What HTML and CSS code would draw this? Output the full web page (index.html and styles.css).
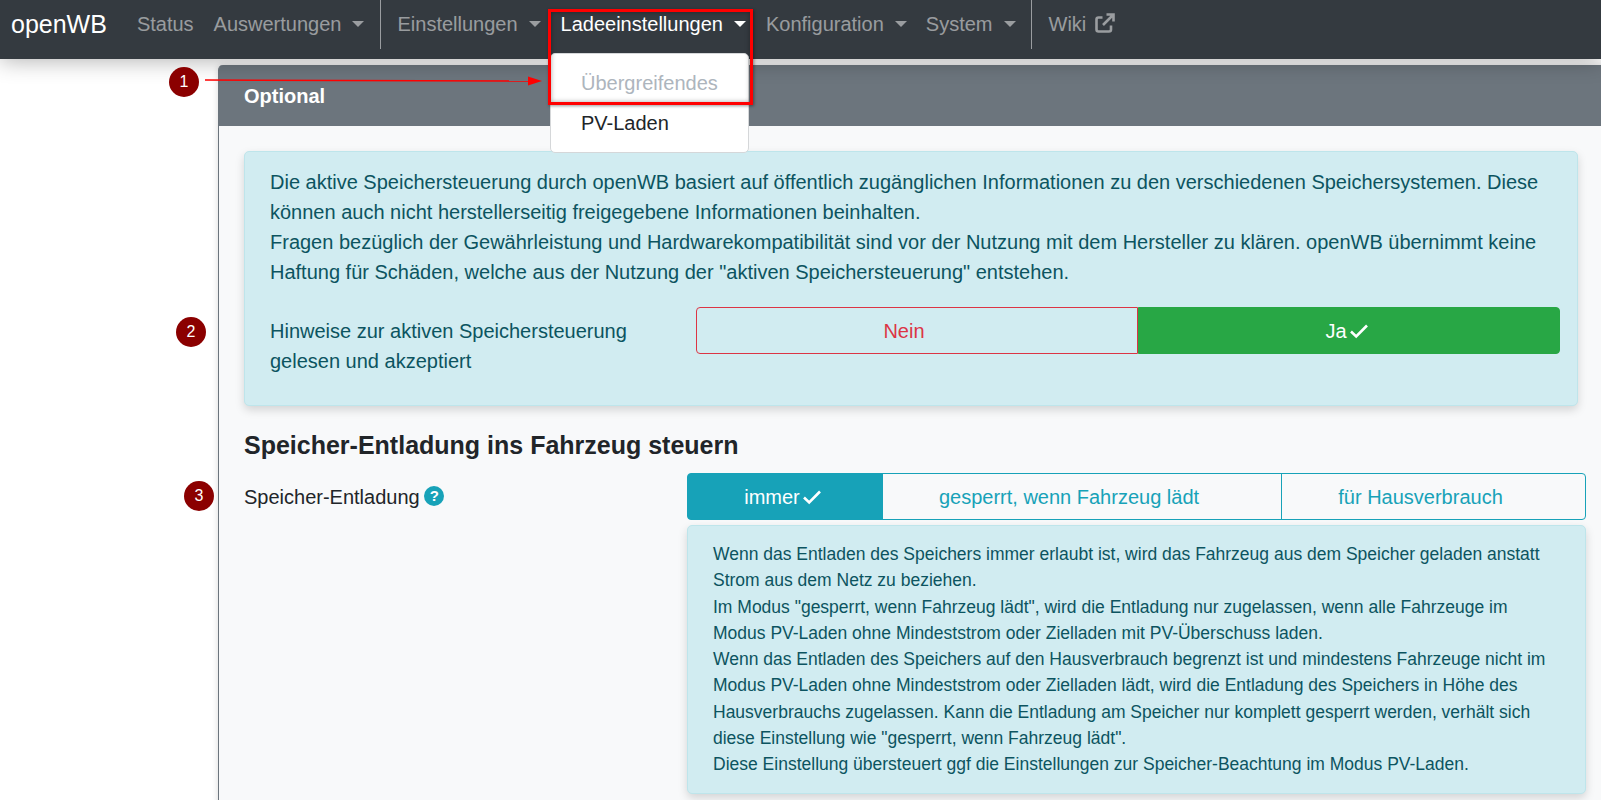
FILE: index.html
```html
<!DOCTYPE html>
<html lang="de">
<head>
    <meta charset="UTF-8">
    <title>openWB</title>
    <link rel="stylesheet" href="styles.css">
</head>
<body>

<nav class="navbar">
    <a class="brand">openWB</a>
    <a class="nav-link">Status</a>
    <a class="nav-link caret">Auswertungen</a>
    <span class="nav-divider"></span>
    <a class="nav-link caret">Einstellungen</a>
    <a class="nav-link caret active">Ladeeinstellungen</a>
    <a class="nav-link caret tight">Konfiguration</a>
    <a class="nav-link caret">System</a>
    <span class="nav-divider divider-end"></span>
    <a class="nav-link wiki">Wiki
        <svg class="icon-external" viewBox="0 0 20 20"><path d="M7.500 4.500H3.500a2 2 0 0 0-2 2v10a2 2 0 0 0 2 2h10.500a2 2 0 0 0 2-2V12.500"/><path d="M8 12L18 2M11.500 1.500h7v7"/></svg>
    </a>
</nav>

<main class="page">
    <section class="card">
        <div class="card-header">Optional</div>
        <div class="card-body">
            <div class="alert">
                Die aktive Speichersteuerung durch openWB basiert auf öffentlich zugänglichen Informationen zu den verschiedenen Speichersystemen. Diese können auch nicht herstellerseitig freigegebene Informationen beinhalten.<br>
                Fragen bezüglich der Gewährleistung und Hardwarekompatibilität sind vor der Nutzung mit dem Hersteller zu klären. openWB übernimmt keine Haftung für Schäden, welche aus der Nutzung der "aktiven Speichersteuerung" entstehen.
                <div class="alert-row">
                    <div class="alert-label">Hinweise zur aktiven Speichersteuerung gelesen und akzeptiert</div>
                    <div class="btn-group accept-group">
                        <button class="btn btn-nein">Nein</button>
                        <button class="btn btn-ja">Ja<svg class="icon-check" viewBox="0 0 20 16"><path d="M2 8.500L7.200 13.500L18 2.500"/></svg></button>
                    </div>
                </div>
            </div>

            <h2 class="section-title">Speicher-Entladung ins Fahrzeug steuern</h2>

            <div class="form-row">
                <div class="form-label">Speicher-Entladung <span class="help-icon">?</span></div>
                <div class="form-field">
                    <div class="btn-group mode-group">
                        <button class="btn btn-mode selected">immer<svg class="icon-check" viewBox="0 0 20 16"><path d="M2 8.500L7.200 13.500L18 2.500"/></svg></button>
                        <button class="btn btn-mode">gesperrt, wenn Fahrzeug lädt</button>
                        <button class="btn btn-mode">für Hausverbrauch</button>
                    </div>
                    <div class="help-box">
                        Wenn das Entladen des Speichers immer erlaubt ist, wird das Fahrzeug aus dem Speicher geladen anstatt Strom aus dem Netz zu beziehen.<br>
                        Im Modus "gesperrt, wenn Fahrzeug lädt", wird die Entladung nur zugelassen, wenn alle Fahrzeuge im Modus PV-Laden ohne Mindeststrom oder Zielladen mit PV-Überschuss laden.<br>
                        Wenn das Entladen des Speichers auf den Hausverbrauch begrenzt ist und mindestens Fahrzeuge nicht im Modus PV-Laden ohne Mindeststrom oder Zielladen lädt, wird die Entladung des Speichers in Höhe des Hausverbrauchs zugelassen. Kann die Entladung am Speicher nur komplett gesperrt werden, verhält sich diese Einstellung wie "gesperrt, wenn Fahrzeug lädt".<br>
                        Diese Einstellung übersteuert ggf die Einstellungen zur Speicher-Beachtung im Modus PV-Laden.
                    </div>
                </div>
            </div>
        </div>
    </section>
</main>

<!-- open menu -->
<div class="dropdown">
    <div class="dropdown-item disabled">Übergreifendes</div>
    <div class="dropdown-item">PV-Laden</div>
</div>

<!-- annotations on top of the screenshot -->
<div class="mark-box"></div>
<svg class="mark-arrow" viewBox="0 0 337 12"><path d="M0 6L325 7" stroke="#f00" stroke-width="1.500"/><path d="M323 2.500L337 7L323 11.500Z" fill="#f00"/></svg>
<div class="marker marker-1">1</div>
<div class="marker marker-2">2</div>
<div class="marker marker-3">3</div>

</body>
</html>
```

FILE: styles.css
```css
html, body {
    margin: 0;
    height: 800px;
    overflow: hidden;
}
body {
    font-family: "Liberation Sans", Arial, sans-serif;
    font-size: 20px;
    line-height: 30px;
    color: #212529;
    background: #fff;
}
.navbar {
    display: flex;
    align-items: flex-start;
    height: 59px;
    padding-left: 11px;
    background: #343a40;
    box-shadow: 0 2px 22px rgba(0,0,0,0.3);
    position: relative;
    z-index: 1;
}
.brand {
    color: #fff;
    font-size: 25px;
    line-height: 48px;
    margin-right: 20px;
}
.nav-link {
    color: rgba(255,255,255,0.5);
    padding: 9px 10px;
    white-space: nowrap;
}
.nav-link.active {
    color: #fff;
}
.nav-link.tight {
    margin-right: -1px;
}
.caret::after {
    content: "";
    display: inline-block;
    margin-left: 11px;
    vertical-align: 4px;
    border-top: 6px solid currentColor;
    border-left: 6px solid transparent;
    border-right: 6px solid transparent;
}
.nav-divider {
    width: 1px;
    height: 49px;
    margin: 0 6px;
    background: rgba(255,255,255,0.5);
}
.nav-divider.divider-end {
    margin-left: 5px;
    margin-right: 7px;
}
.icon-external {
    width: 20px;
    height: 20px;
    margin-left: 3px;
    vertical-align: -2px;
    fill: none;
    stroke: rgba(255,255,255,0.5);
    stroke-width: 2.600;
}
.page {
    padding: 6px 0 0 218px;
}
.card {
    width: 1400px;
    border-left: 1px solid #6c757d;
    border-top-left-radius: 5px;
    background: #f8f9fa;
    height: 740px;
    box-shadow: 0 0 6px rgba(0,0,0,0.15);
}
.card-header {
    height: 61px;
    padding-left: 25px;
    line-height: 63px;
    font-weight: bold;
    color: #fff;
    background: #6c757d;
    border-top-left-radius: 4px;
}
.card-body {
    padding: 25px 0 0 25px;
}
.alert {
    width: 1307px;
    height: 223px;
    padding: 15px 0 15px 25px;
    border: 1px solid #bee5eb;
    border-radius: 5px;
    background: #d1ecf1;
    color: #0c5460;
    box-shadow: 0 4px 10px rgba(0,0,0,0.15);
}
.alert-row {
    display: grid;
    grid-template-columns: 426px 864px;
    margin-top: 20px;
}
.alert-label {
    width: 400px;
    padding-top: 9px;
}
.btn-group {
    display: flex;
}
.btn {
    height: 47px;
    padding: 0;
    font: inherit;
    border: 1px solid;
    background: transparent;
    white-space: nowrap;
}
.btn-nein {
    width: 442px;
    padding-right: 26px;
    color: #dc3545;
    border-color: #dc3545;
    border-radius: 4px 0 0 4px;
}
.btn-ja {
    flex: 1;
    padding-right: 4px;
    color: #fff;
    background: #28a745;
    border-color: #28a745;
    border-radius: 0 4px 4px 0;
}
.icon-check {
    width: 20px;
    height: 16px;
    margin-left: 2px;
    vertical-align: -1px;
    fill: none;
    stroke: currentColor;
    stroke-width: 2.600;
}
.section-title {
    margin: 21px 0 10px;
    font-size: 25px;
    line-height: 36px;
}
.form-row {
    display: grid;
    grid-template-columns: 443px 899px;
}
.form-label {
    padding-top: 9px;
}
.help-icon {
    display: inline-block;
    width: 20px;
    height: 20px;
    margin-left: -1px;
    border-radius: 50%;
    background: #17a2b8;
    color: #fff;
    font-size: 15px;
    font-weight: bold;
    line-height: 20px;
    text-align: center;
    vertical-align: 3px;
}
.mode-group {
    display: grid;
    grid-template-columns: 196px 399px 304px;
}
.btn-mode {
    padding-right: 26px;
    color: #17a2b8;
    border-color: #17a2b8;
    margin-left: -1px;
}
.btn-mode:first-child {
    margin-left: 0;
    border-radius: 4px 0 0 4px;
}
.btn-mode:last-child {
    border-radius: 0 4px 4px 0;
}
.btn-mode.selected {
    padding-right: 4px;
    color: #fff;
    background: #17a2b8;
}
.help-box {
    width: 899px;
    box-sizing: border-box;
    margin-top: 5px;
    padding: 15px 25px 16px;
    border: 1px solid #bee5eb;
    border-radius: 5px;
    background: #d1ecf1;
    color: #0c5460;
    font-size: 17.5px;
    line-height: 26.250px;
    box-shadow: 0 4px 10px rgba(0,0,0,0.15);
}
.dropdown {
    position: absolute;
    z-index: 2;
    left: 550px;
    top: 53px;
    width: 199px;
    height: 100px;
    box-sizing: border-box;
    padding: 9px 0;
    background: #fff;
    border: 1px solid #d5d7d9;
    border-radius: 5px;
}
.dropdown-item {
    padding: 4px 30px;
    line-height: 32px;
}
.dropdown-item.disabled {
    color: #adb5bd;
}
.mark-box {
    position: absolute;
    z-index: 3;
    left: 548px;
    top: 9px;
    width: 199px;
    height: 90px;
    border: 3px solid #f00;
    box-shadow: 1px 1px 3px rgba(0,0,0,0.4), inset 0 0 5px rgba(0,0,0,0.35);
}
.mark-arrow {
    position: absolute;
    z-index: 3;
    left: 205px;
    top: 74px;
    width: 337px;
    height: 12px;
}
.marker {
    position: absolute;
    z-index: 4;
    width: 30px;
    height: 30px;
    border-radius: 50%;
    background: #8b0000;
    color: #fff;
    font-size: 16px;
    line-height: 30px;
    text-align: center;
}
.marker-1 { left: 169px; top: 67px; }
.marker-2 { left: 176px; top: 317px; }
.marker-3 { left: 184px; top: 481px; }
```
